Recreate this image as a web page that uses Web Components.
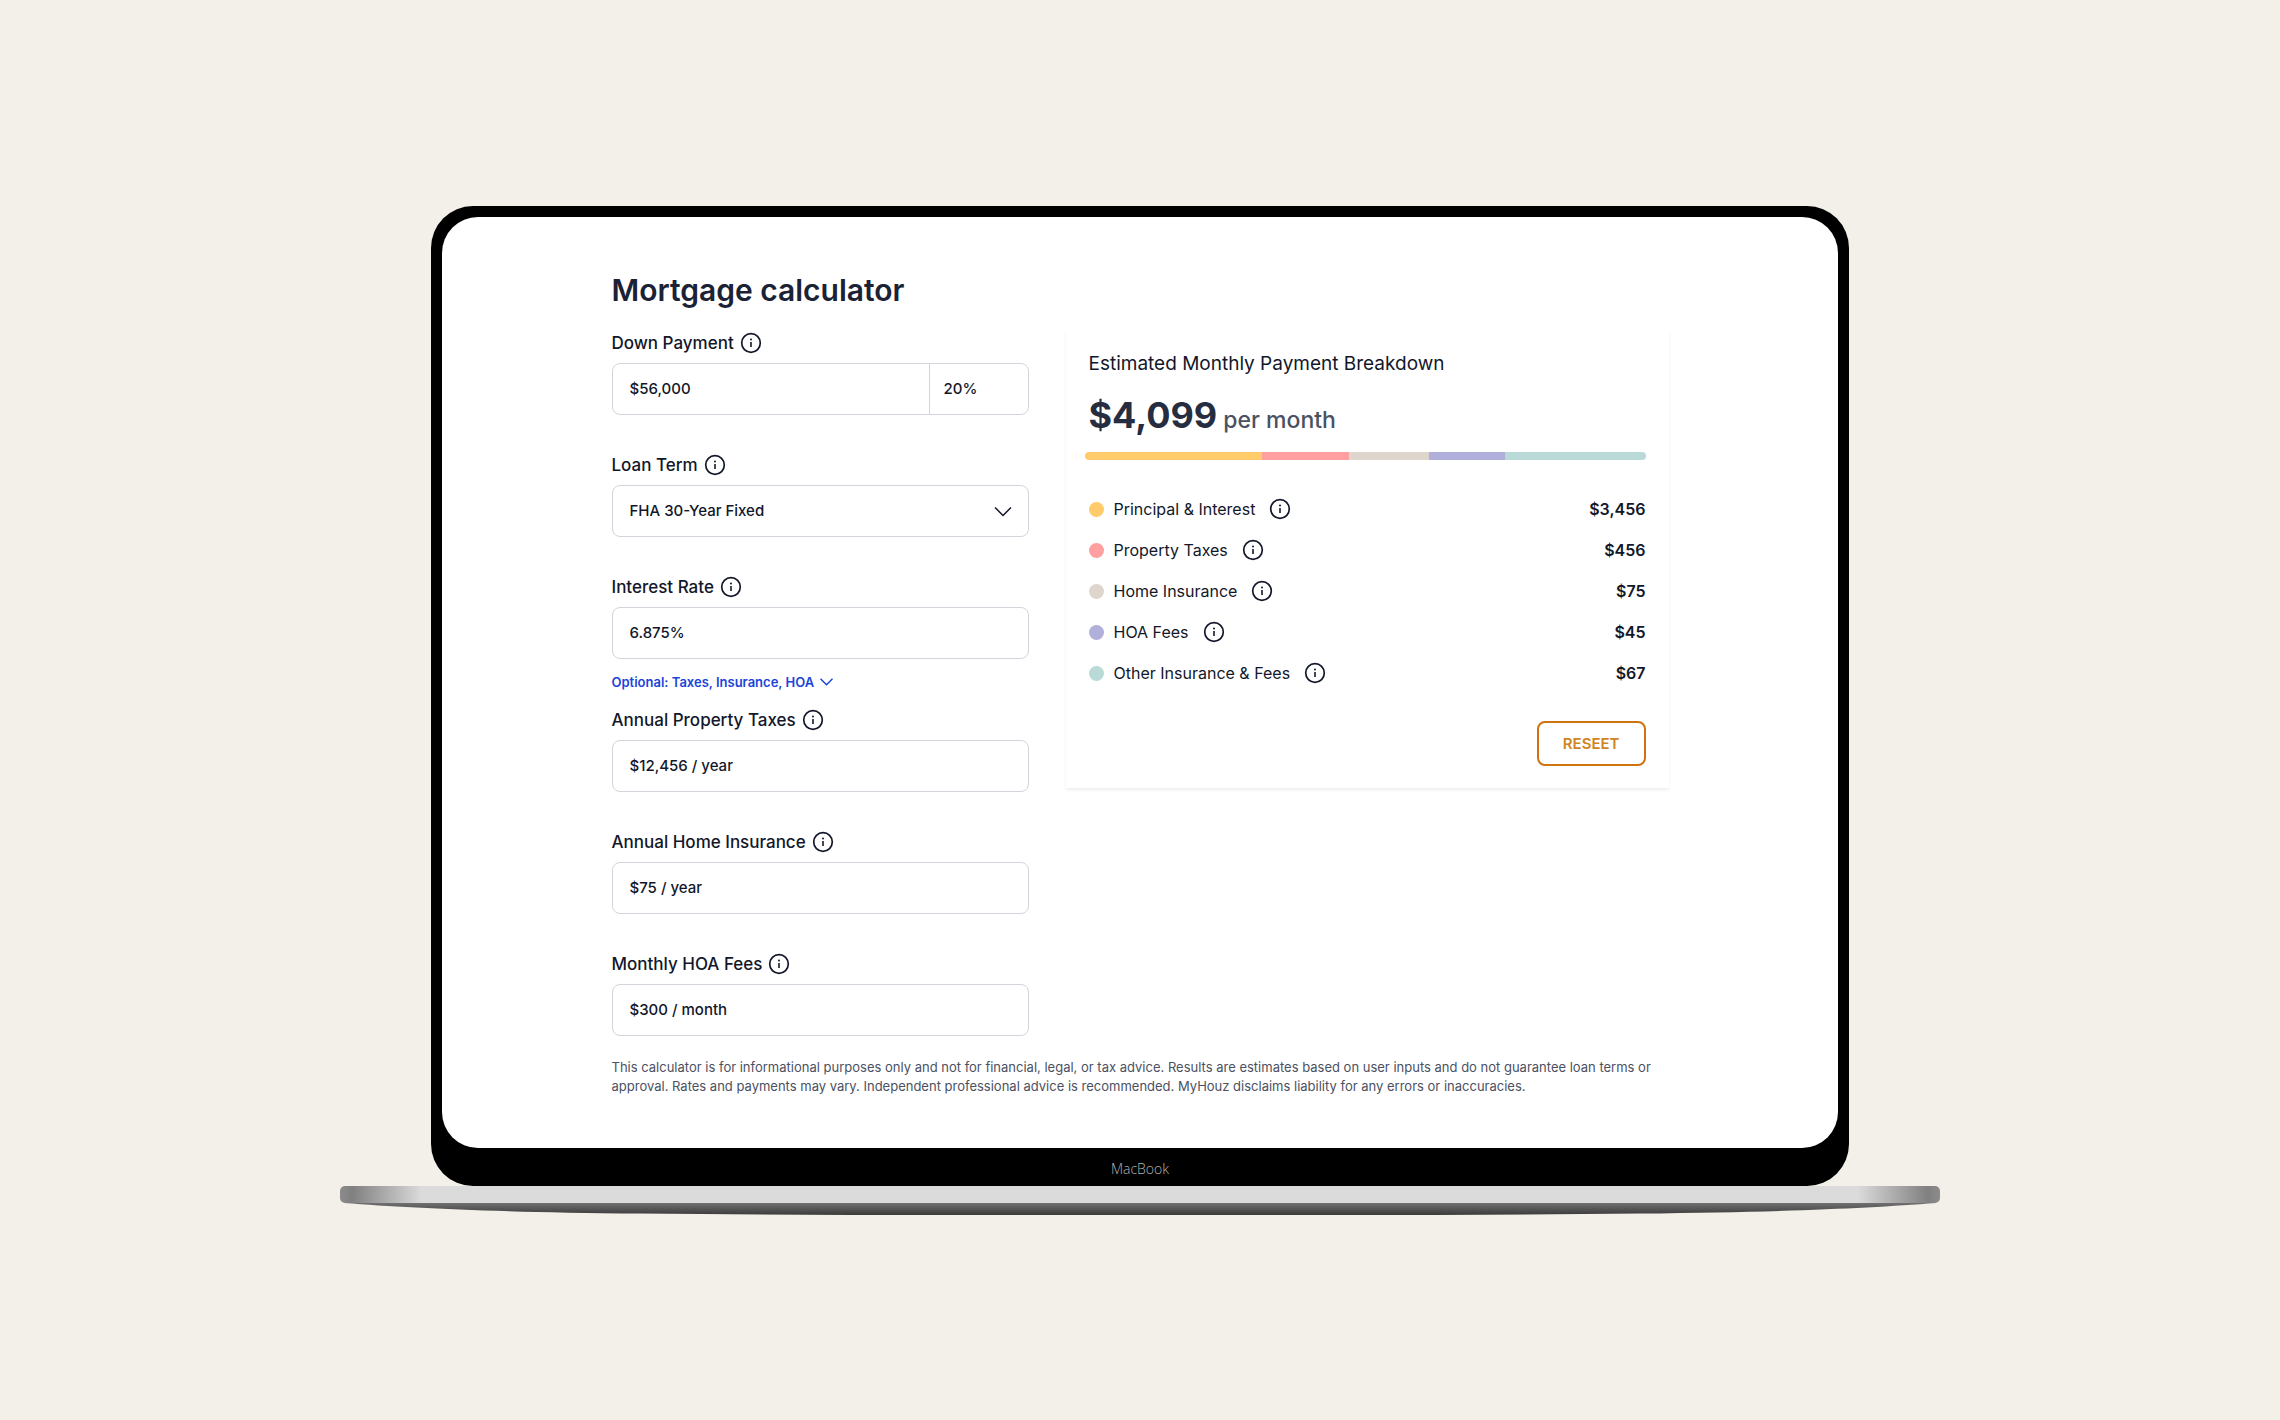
<!DOCTYPE html>
<html lang="en">
<head>
<meta charset="utf-8">
<meta name="viewport" content="width=device-width, initial-scale=1">
<title>Mortgage calculator</title>
<style>
    :root {
        --ink: #12172a;
        --muted: #4b5162;
        --line: #d3d4dc;
        --link: #1a45d8;
        --accent: #d0730f;
    }
    body {
        margin: 0;
        min-height: 100vh;
        display: flex;
        align-items: center;
        justify-content: center;
        background: #f3f0e9;
        color: var(--ink);
        font-family: Inter, "Liberation Sans", sans-serif;
    }
</style>
</head>
<body>

<laptop-frame name="MacBook">
    <mortgage-calculator></mortgage-calculator>
</laptop-frame>

<template id="laptop-frame">
    <style>
        :host {
            display: block;
            width: 100%;
            max-width: 1600px;
        }
        .lid {
            margin: 0 91px;
            padding: 11px 11px 0;
            background: #000;
            border-radius: 42px;
        }
        .screen {
            background: #fff;
            border-radius: 36px;
        }
        .name {
            height: 38px;
            line-height: 42px;
            text-align: center;
            color: #b4b4b4;
            font-family: "Open Sans", sans-serif;
            font-size: 14px;
            font-weight: 300;
        }
        .deck {
            height: 17px;
            border-radius: 5px;
            background: linear-gradient(90deg, #8c8c8c, #808080 12px, #dbdbdb 82px,
                #dbdbdb calc(100% - 82px), #808080 calc(100% - 12px), #8c8c8c);
        }
        svg {
            display: block;
            width: 100%;
            height: 12px;
        }
    </style>
    <div class="lid">
        <div class="screen"><slot></slot></div>
        <div class="name"></div>
    </div>
    <div class="deck"></div>
    <svg viewBox="0 0 1600 12" preserveAspectRatio="none" aria-hidden="true">
        <defs>
            <linearGradient id="shade" x1="0" y1="0" x2="0" y2="1">
                <stop offset="0" stop-color="#707070"/>
                <stop offset="1" stop-color="#3a3a3a"/>
            </linearGradient>
        </defs>
        <path fill="url(#shade)" d="M4 0C70 5 150 9 300 10.500C400 11.500 500 12 600 12H1000C1100 12 1200 11.500 1300 10.500C1450 9 1530 5 1596 0Z"/>
    </svg>
</template>

<template id="info-icon">
    <style>
        :host {
            display: block;
            flex: none;
            width: 22px;
            height: 22px;
        }
        svg { display: block; }
    </style>
    <svg width="22" height="22" viewBox="0 0 22 22" fill="none" stroke="#12172a" aria-hidden="true">
        <circle cx="11" cy="11" r="9.300" stroke-width="1.700"/>
        <path d="M11 10V15" stroke-width="1.600"/>
        <circle cx="11" cy="7.500" r="1" fill="#12172a" stroke="none"/>
    </svg>
</template>

<template id="form-field">
    <style>
        :host { display: block; }
        .head {
            display: flex;
            align-items: center;
            gap: 6px;
            height: 22px;
            margin-bottom: 9px;
        }
        label {
            font-size: 17px;
            font-weight: 500;
        }
        .box {
            position: relative;
            display: flex;
            height: 52px;
            box-sizing: border-box;
            border: 1px solid var(--line);
            border-radius: 8px;
            background: #fff;
        }
        input, select {
            flex: 1;
            min-width: 0;
            box-sizing: border-box;
            margin: 0;
            padding: 0 17px;
            border: 0;
            border-radius: 8px;
            background: none;
            color: inherit;
            font: inherit;
            font-size: 15px;
            font-weight: 500;
            appearance: none;
        }
        .share {
            flex: none;
            width: 99px;
            padding: 0 14px;
            border-left: 1px solid var(--line);
            border-radius: 0;
        }
        .box svg {
            position: absolute;
            right: 16px;
            top: 20px;
            pointer-events: none;
        }
    </style>
    <div class="head">
        <label for="value"></label>
        <info-icon></info-icon>
    </div>
    <div class="box"></div>
</template>

<template id="breakdown-row">
    <style>
        :host {
            display: flex;
            align-items: center;
            height: 41px;
            font-size: 16px;
        }
        .dot {
            width: 15px;
            height: 15px;
            margin-right: 10px;
            border-radius: 50%;
        }
        info-icon { margin-left: 14px; }
        .amount {
            margin-left: auto;
            font-weight: 600;
        }
    </style>
    <span class="dot"></span>
    <slot></slot>
    <info-icon></info-icon>
    <span class="amount"></span>
</template>

<template id="payment-breakdown">
    <style>
        :host {
            display: block;
            box-sizing: border-box;
            padding: 20px 23px 22px;
            background: #fff;
            box-shadow: 0 2px 3px rgba(18, 23, 42, 0.07);
        }
        h2 {
            margin: 0;
            line-height: 28px;
            font-size: 19px;
            font-weight: 400;
        }
        .total {
            margin: 15px 0 10px;
            line-height: 44px;
            color: #262d40;
            font-size: 36px;
            font-weight: 700;
        }
        .total small {
            color: var(--muted);
            font-size: 23px;
            font-weight: 500;
        }
        .bar {
            display: flex;
            height: 8px;
            margin: 0 0 29px -4px;
            border-radius: 4px;
            overflow: hidden;
        }
        .foot {
            display: flex;
            justify-content: flex-end;
            margin-top: 27px;
        }
        button {
            height: 45px;
            padding: 0 24px;
            border: 2px solid var(--accent);
            border-radius: 8px;
            background: #fff;
            color: #d08522;
            font: inherit;
            font-size: 15px;
            font-weight: 600;
        }
    </style>
    <h2>Estimated Monthly Payment Breakdown</h2>
    <p class="total">$4,099<small> per month</small></p>
    <div class="bar"></div>
    <div class="rows"></div>
    <div class="foot"><button type="button">RESEET</button></div>
</template>

<template id="mortgage-calculator">
    <style>
        :host {
            display: block;
            max-width: 1057px;
            margin: 0 auto;
            padding: 53px 24px 52px;
        }
        h1 {
            margin: 0 0 20px;
            line-height: 40px;
            font-size: 30px;
            font-weight: 600;
            color: #1b2236;
        }
        .columns {
            display: grid;
            grid-template-columns: 417fr 603fr;
            column-gap: 37px;
            align-items: start;
        }
        .group {
            display: grid;
            row-gap: 39px;
        }
        .group:first-child { padding-top: 2px; }
        .more {
            display: flex;
            align-items: center;
            gap: 6px;
            height: 20px;
            margin: 13px 0 17px;
            padding: 0;
            border: 0;
            background: none;
            color: var(--link);
            font: inherit;
            font-size: 13px;
            font-weight: 600;
        }
        .note {
            margin: 22px 0 0;
            line-height: 19px;
            color: var(--muted);
            font-size: 13px;
        }
    </style>
    <h1>Mortgage calculator</h1>
    <div class="columns">
        <form>
            <div class="group">
                <form-field label="Down Payment" value="$56,000" share="20%"></form-field>
                <form-field label="Loan Term" value="FHA 30-Year Fixed" type="select"></form-field>
                <form-field label="Interest Rate" value="6.875%"></form-field>
            </div>
            <button class="more" type="button">
                Optional: Taxes, Insurance, HOA
                <svg width="13" height="8" viewBox="0 0 13 8" fill="none" stroke="currentColor" stroke-width="1.500" aria-hidden="true"><path d="M0.500 0.800L6.500 6.800L12.500 0.800"/></svg>
            </button>
            <div class="group">
                <form-field label="Annual Property Taxes" value="$12,456 / year"></form-field>
                <form-field label="Annual Home Insurance" value="$75 / year"></form-field>
                <form-field label="Monthly HOA Fees" value="$300 / month"></form-field>
            </div>
        </form>
        <payment-breakdown></payment-breakdown>
    </div>
    <p class="note">This calculator is for informational purposes only and not for financial, legal, or tax advice. Results are estimates based on user inputs and do not guarantee loan terms or approval. Rates and payments may vary. Independent professional advice is recommended. MyHouz disclaims liability for any errors or inaccuracies.</p>
</template>

<script>
    const PAYMENTS = [
        { name: 'Principal & Interest', amount: '$3,456', color: '#ffcb6b', share: 177 },
        { name: 'Property Taxes', amount: '$456', color: '#ff9f9f', share: 87 },
        { name: 'Home Insurance', amount: '$75', color: '#ded5cc', share: 80 },
        { name: 'HOA Fees', amount: '$45', color: '#b0b0db', share: 76 },
        { name: 'Other Insurance & Fees', amount: '$67', color: '#b9dad7', share: 141 },
    ];

    class TemplateElement extends HTMLElement {
        constructor() {
            super();
            const shadow = this.attachShadow({ mode: 'open' });
            shadow.appendChild(document.getElementById(this.localName).content.cloneNode(true));
        }
        find(selector) {
            return this.shadowRoot.querySelector(selector);
        }
    }

    class InfoIcon extends TemplateElement {}

    class LaptopFrame extends TemplateElement {
        connectedCallback() {
            this.find('.name').textContent = this.getAttribute('name');
        }
    }

    class FormField extends TemplateElement {
        connectedCallback() {
            const box = this.find('.box');
            const value = this.getAttribute('value');
            this.find('label').textContent = this.getAttribute('label');

            if (this.getAttribute('type') === 'select') {
                box.innerHTML = `<select id="value"><option>${ value }</option></select>
                    <svg width="18" height="11" viewBox="0 0 18 11" fill="none" stroke="#12172a" stroke-width="1.500" aria-hidden="true"><path d="M1 1.500L9 9.500L17 1.500"/></svg>`;
            } else {
                box.innerHTML = `<input id="value" type="text" value="${ value }">`;
            }
            // second box for the percentage
            if (this.hasAttribute('share')) {
                box.innerHTML += `<input class="share" type="text" aria-label="Percent" value="${ this.getAttribute('share') }">`;
            }
        }
    }

    class BreakdownRow extends TemplateElement {
        connectedCallback() {
            this.find('.dot').style.background = this.getAttribute('color');
            this.find('.amount').textContent = this.getAttribute('amount');
        }
    }

    class PaymentBreakdown extends TemplateElement {
        connectedCallback() {
            for (const payment of PAYMENTS) {
                const part = document.createElement('span');
                part.style.flex = payment.share;
                part.style.background = payment.color;
                this.find('.bar').appendChild(part);

                const row = document.createElement('breakdown-row');
                row.setAttribute('color', payment.color);
                row.setAttribute('amount', payment.amount);
                row.textContent = payment.name;
                this.find('.rows').appendChild(row);
            }
        }
    }

    class MortgageCalculator extends TemplateElement {}

    customElements.define('info-icon', InfoIcon);
    customElements.define('laptop-frame', LaptopFrame);
    customElements.define('form-field', FormField);
    customElements.define('breakdown-row', BreakdownRow);
    customElements.define('payment-breakdown', PaymentBreakdown);
    customElements.define('mortgage-calculator', MortgageCalculator);
</script>
</body>
</html>
